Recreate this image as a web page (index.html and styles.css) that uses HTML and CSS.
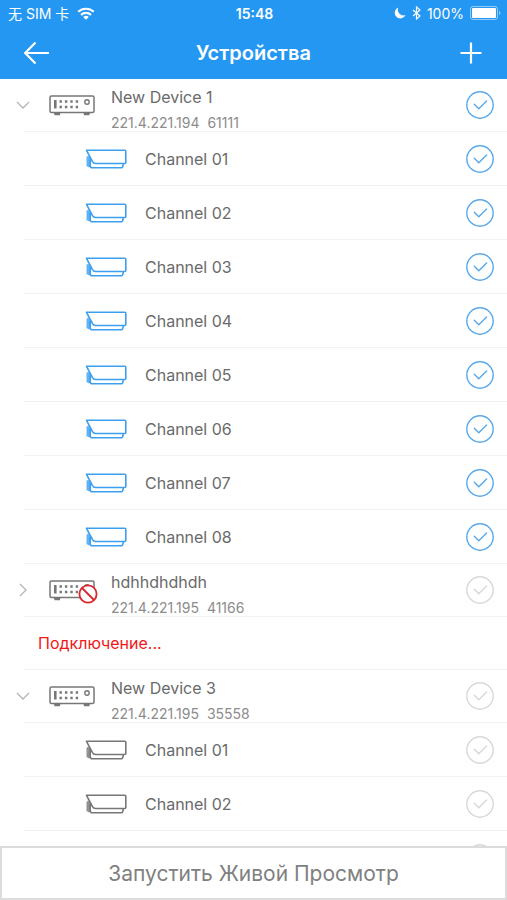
FILE: index.html
```html
<!DOCTYPE html>
<html lang="ru">
<head>
<meta charset="utf-8">
<meta name="viewport" content="width=device-width, initial-scale=1">
<title>Устройства</title>
<link rel="stylesheet" href="styles.css">
</head>
<body>
<svg class="sprite" aria-hidden="true">
  <symbol id="dvr" viewBox="0 0 46 22">
    <g fill="none" stroke="currentColor" stroke-width="1.500">
      <rect x="1" y="2" width="44" height="16.500" rx="1.500"/>
      <circle cx="38" cy="8" r="2.200" stroke-width="1.400"/>
    </g>
    <path d="M4.800 18.500h6.800l-.8 2.700H5.600zM34.300 18.500h6.800l-.8 2.700h-5.200z" fill="currentColor"/>
    <path d="M6.300 6v8.500" stroke="currentColor" stroke-width="2.600"/>
    <path d="M10.500 7.500h20M10.500 13h20" stroke="currentColor" stroke-width="2.400" stroke-dasharray="2.400 3"/>
  </symbol>
  <symbol id="camera" viewBox="0 0 42 22">
    <path d="M3 7.500 1.500 9v9l2.500 1.500 2-1.500V10.500z" fill="currentColor" fill-opacity=".8"/>
    <g fill="none" stroke="currentColor" stroke-width="1.600" stroke-linejoin="round">
      <path d="M1.500 2.300h38.300q1 0 1 1v11.200q0 1-1 1H10.500Q8.500 15.500 7.500 13.700z"/>
      <path d="M5.200 11v6.500q0 2.300 2 2.300h29.300q1.500 0 1.800-4"/>
    </g>
  </symbol>
  <symbol id="tick" viewBox="0 0 28 28">
    <g fill="none" stroke="currentColor" stroke-width="1.400">
      <circle cx="14" cy="14" r="13.200"/>
      <path d="m8.300 13.300 4.500 4.400 7.800-7.800" stroke-linecap="round"/>
    </g>
  </symbol>
  <symbol id="chevron" viewBox="0 0 14 14">
    <path d="m1 4 6 6 6-6" fill="none" stroke="currentColor" stroke-width="1.300"/>
  </symbol>
</svg>

<header class="top">
  <div class="status">
    <div class="status-left">
      <span>无 SIM 卡</span>
      <svg class="wifi" viewBox="0 0 18 13" aria-hidden="true">
        <g fill="none" stroke="currentColor" stroke-width="2.200"><path d="M1.200 4.800a11.500 11.500 0 0 1 15.600 0M4 7.900a7.300 7.300 0 0 1 10 0"/></g>
        <path d="M9 12.800 6.200 10a4 4 0 0 1 5.600 0z" fill="currentColor"/>
      </svg>
    </div>
    <span class="clock">15:48</span>
    <div class="status-right">
      <svg class="moon" viewBox="0 0 12 12" aria-hidden="true"><path d="M4.200.6A5.600 5.600 0 1 0 11.500 8 5.700 5.700 0 0 1 4.200.6z" fill="currentColor"/></svg>
      <svg class="bluetooth" viewBox="0 0 9 14" aria-hidden="true"><path d="m1 4 7 6-3.500 3V1L8 4l-7 6" fill="none" stroke="currentColor" stroke-width="1.200"/></svg>
      <span>100%</span>
      <svg class="battery" viewBox="0 0 31 14" aria-hidden="true">
        <rect x=".5" y=".5" width="27" height="13" rx="2.500" fill="none" stroke="currentColor" stroke-opacity=".5"/>
        <rect x="2" y="2" width="24" height="10" rx="1" fill="currentColor"/>
        <path d="M29 5q1.500.5 1.500 2T29 9z" fill="currentColor" fill-opacity=".5"/>
      </svg>
    </div>
  </div>
  <div class="nav">
    <button class="nav-button" type="button" aria-label="Назад">
      <svg viewBox="0 0 26 24" aria-hidden="true"><path d="M12.500 1.500 2.200 12l10.300 10.500M2.200 12H26" fill="none" stroke="currentColor" stroke-width="2.200"/></svg>
    </button>
    <h1>Устройства</h1>
    <button class="nav-button" type="button" aria-label="Добавить">
      <svg viewBox="0 0 26 24" aria-hidden="true"><path d="M13 1.500v21M2.500 12h21" fill="none" stroke="currentColor" stroke-width="2.200"/></svg>
    </button>
  </div>
</header>

<main class="list">
  <section class="group">
    <div class="row device">
      <button class="toggle" type="button" aria-label="Свернуть" aria-expanded="true"><svg><use href="#chevron"/></svg></button>
      <span class="dvr"><svg><use href="#dvr"/></svg></span>
      <div class="info"><h2>New Device 1</h2><p><span>221.4.221.194</span><span>61111</span></p></div>
      <label class="check on"><input type="checkbox" aria-label="New Device 1" checked><svg><use href="#tick"/></svg></label>
    </div>
    <div class="row channel on"><svg class="camera"><use href="#camera"/></svg><label for="a1">Channel 01</label><span class="check on"><input id="a1" type="checkbox" checked><svg><use href="#tick"/></svg></span></div>
    <div class="row channel on"><svg class="camera"><use href="#camera"/></svg><label for="a2">Channel 02</label><span class="check on"><input id="a2" type="checkbox" checked><svg><use href="#tick"/></svg></span></div>
    <div class="row channel on"><svg class="camera"><use href="#camera"/></svg><label for="a3">Channel 03</label><span class="check on"><input id="a3" type="checkbox" checked><svg><use href="#tick"/></svg></span></div>
    <div class="row channel on"><svg class="camera"><use href="#camera"/></svg><label for="a4">Channel 04</label><span class="check on"><input id="a4" type="checkbox" checked><svg><use href="#tick"/></svg></span></div>
    <div class="row channel on"><svg class="camera"><use href="#camera"/></svg><label for="a5">Channel 05</label><span class="check on"><input id="a5" type="checkbox" checked><svg><use href="#tick"/></svg></span></div>
    <div class="row channel on"><svg class="camera"><use href="#camera"/></svg><label for="a6">Channel 06</label><span class="check on"><input id="a6" type="checkbox" checked><svg><use href="#tick"/></svg></span></div>
    <div class="row channel on"><svg class="camera"><use href="#camera"/></svg><label for="a7">Channel 07</label><span class="check on"><input id="a7" type="checkbox" checked><svg><use href="#tick"/></svg></span></div>
    <div class="row channel on"><svg class="camera"><use href="#camera"/></svg><label for="a8">Channel 08</label><span class="check on"><input id="a8" type="checkbox" checked><svg><use href="#tick"/></svg></span></div>
  </section>

  <section class="group">
    <div class="row device">
      <button class="toggle closed" type="button" aria-label="Развернуть" aria-expanded="false"><svg><use href="#chevron"/></svg></button>
      <span class="dvr"><svg><use href="#dvr"/></svg>
        <svg class="blocked" viewBox="0 0 20 20"><g fill="none" stroke="currentColor" stroke-width="1.800"><circle cx="10" cy="10" r="8.600" fill="#fff"/><path d="m4 4 12 12"/></g></svg>
      </span>
      <div class="info"><h2>hdhhdhdhdh</h2><p><span>221.4.221.195</span><span>41166</span></p></div>
      <label class="check"><input type="checkbox" aria-label="hdhhdhdhdh"><svg><use href="#tick"/></svg></label>
    </div>
    <p class="row connecting" role="status">Подключение...</p>
  </section>

  <section class="group">
    <div class="row device">
      <button class="toggle" type="button" aria-label="Свернуть" aria-expanded="true"><svg><use href="#chevron"/></svg></button>
      <span class="dvr"><svg><use href="#dvr"/></svg></span>
      <div class="info"><h2>New Device 3</h2><p><span>221.4.221.195</span><span>35558</span></p></div>
      <label class="check"><input type="checkbox" aria-label="New Device 3"><svg><use href="#tick"/></svg></label>
    </div>
    <div class="row channel"><svg class="camera"><use href="#camera"/></svg><label for="c1">Channel 01</label><span class="check"><input id="c1" type="checkbox"><svg><use href="#tick"/></svg></span></div>
    <div class="row channel"><svg class="camera"><use href="#camera"/></svg><label for="c2">Channel 02</label><span class="check"><input id="c2" type="checkbox"><svg><use href="#tick"/></svg></span></div>
    <div class="row channel"><svg class="camera"><use href="#camera"/></svg><label for="c3"></label><span class="check"><input id="c3" type="checkbox" aria-label="Channel 03"><svg><use href="#tick"/></svg></span></div>
  </section>
</main>

<button class="start" type="button">Запустить Живой Просмотр</button>
</body>
</html>
```
FILE: styles.css
```css
* {
  box-sizing: border-box;
}

body {
  margin: 0;
  height: 100vh;
  display: flex;
  flex-direction: column;
  background: #fff;
  color: #6a6a6a;
  font-family: Inter, "Noto Sans CJK SC", sans-serif;
}

h1, h2, p {
  margin: 0;
}

button {
  padding: 0;
  border: 0;
  background: none;
  color: inherit;
  font: inherit;
  cursor: pointer;
}

svg {
  display: block;
}

.sprite {
  position: absolute;
  width: 0;
  height: 0;
}

.top {
  flex: none;
  background: #2497f3;
  color: #fff;
}

.status {
  display: grid;
  grid-template-columns: 1fr auto 1fr;
  align-items: center;
  height: 26px;
  padding: 0 6px 0 8px;
  font-size: 14px;
}

.status-left, .status-right {
  display: flex;
  align-items: center;
  gap: 8px;
}

.status-right {
  justify-content: flex-end;
  gap: 6px;
}

.clock {
  font-weight: 600;
}

.wifi {
  width: 18px;
  height: 13px;
}

.moon {
  width: 12px;
  height: 12px;
}

.bluetooth {
  width: 9px;
  height: 14px;
}

.battery {
  width: 31px;
  height: 14px;
}

.nav {
  display: grid;
  grid-template-columns: 48px 1fr 48px;
  align-items: center;
  height: 53px;
  padding: 0 12px;
}

.nav h1 {
  font-size: 20px;
  font-weight: 600;
  line-height: 28px;
  text-align: center;
}

.nav-button {
  display: grid;
  place-items: center;
  height: 48px;
}

.nav-button svg {
  width: 26px;
  height: 24px;
}

.list {
  flex: 1;
  min-height: 0;
  overflow-y: auto;
  scrollbar-width: none;
}

.row {
  display: flex;
  align-items: center;
  height: 54px;
  margin-left: 24px;
  padding-right: 13px;
  border-bottom: 1px solid #f2f2f2;
}

.device, .connecting {
  height: 53px;
}

.toggle {
  width: 14px;
  height: 28px;
  margin-left: -8px;
  color: #b4b4b4;
}

.toggle svg {
  width: 14px;
  height: 14px;
}

.closed svg {
  transform: rotate(-90deg);
}

.dvr {
  position: relative;
  margin-left: 19px;
  color: #777;
}

.dvr svg {
  width: 46px;
  height: 22px;
}

.dvr .blocked {
  position: absolute;
  right: -3px;
  bottom: -3px;
  width: 20px;
  height: 20px;
  color: #d9272d;
}

.info {
  flex: 1;
  margin-left: 16px;
}

.info h2 {
  font-size: 16px;
  font-weight: 400;
  line-height: 36px;
}

.info p {
  display: flex;
  gap: 8px;
  color: #8c8c8c;
  font-size: 14px;
  line-height: 16px;
}

.channel {
  padding-left: 61px;
  font-size: 16px;
  color: #777;
}

.camera {
  width: 42px;
  height: 22px;
}

.channel.on .camera {
  color: #3c9ff0;
}

.channel label {
  flex: 1;
  margin-left: 18px;
  color: #6a6a6a;
}

.check {
  position: relative;
  width: 28px;
  height: 28px;
  color: #d8d8d8;
}

.check.on {
  color: #58a9ec;
}

.check input {
  position: absolute;
  inset: 0;
  width: 100%;
  height: 100%;
  margin: 0;
  opacity: 0;
  cursor: pointer;
}

.check svg {
  width: 28px;
  height: 28px;
}

.connecting {
  padding-left: 14px;
  color: #f01818;
  font-size: 16px;
}

.start {
  flex: none;
  height: 54px;
  border: 2px solid #dcdcdc;
  background: #fff;
  color: #808080;
  font-size: 21px;
}
```
